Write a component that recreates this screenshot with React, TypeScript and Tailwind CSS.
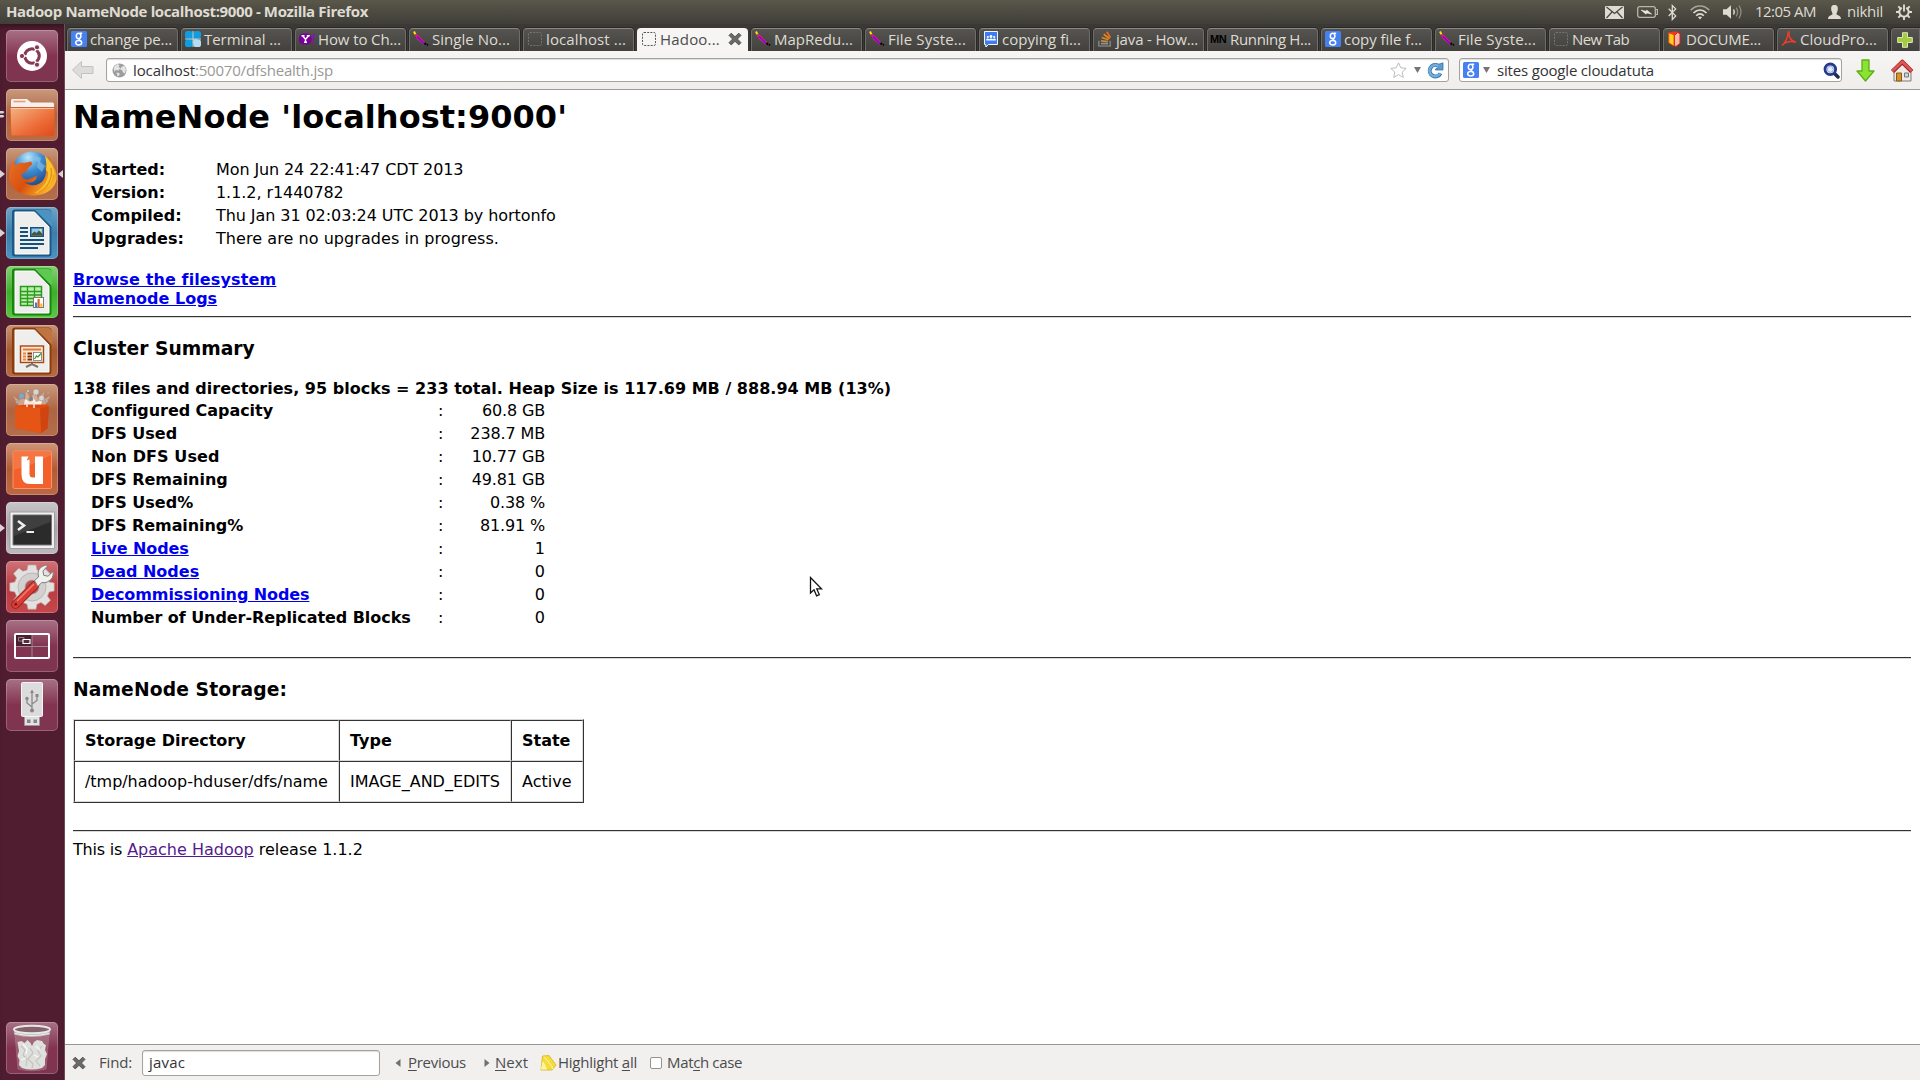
import { useLayoutEffect, useRef, type ReactNode } from "react";

/* Text tracked to occupy a width (w), or its natural width plus an offset (by). */
function Fit({ w, by = 0, className = "", children }: { w?: number; by?: number; className?: string; children: ReactNode }) {
  const ref = useRef<HTMLSpanElement>(null);
  useLayoutEffect(() => {
    const el = ref.current;
    if (!el) return;
    el.style.letterSpacing = "0px";
    const natural = el.getBoundingClientRect().width;
    const count = (el.textContent || "").length;
    const delta = w === undefined ? by : w - natural;
    el.style.letterSpacing = `${delta / count}px`;
  }, [w, by]);
  return (
    <span ref={ref} className={`inline-block whitespace-pre ${className}`}>
      {children}
    </span>
  );
}

/* ---------- favicons ---------- */
const Google = () => (
  <svg width="16" height="16" viewBox="0 0 16 16">
    <rect width="16" height="16" rx="1.5" fill="#4681f0" />
    <g fill="none" stroke="#fff" strokeWidth="1.5">
      <ellipse cx="7.6" cy="4.9" rx="2.3" ry="2.7" />
      <path d="M9 2.3h2.2M8.6 7.4c-2 1 .9 1.6 1.4 3" />
      <ellipse cx="7.7" cy="11.8" rx="3" ry="2.2" />
    </g>
  </svg>
);
const Clover = () => (
  <svg width="16" height="16" viewBox="0 0 16 16">
    <rect x="0" y="0" width="7.600" height="7.600" rx="2.600" fill="#0d9de0" />
    <rect x="8.400" y="0" width="7.600" height="7.600" rx="2.600" fill="#0d9de0" />
    <rect x="0" y="8.400" width="7.600" height="7.600" rx="2.600" fill="#0d9de0" />
    <rect x="8.400" y="8.400" width="7.600" height="7.600" rx="2.600" fill="#b5def5" />
    <path d="M4 4h3.600v3.600H4zM8.400 4H12v3.600H8.400zM4 8.400h3.600V12H4z" fill="#0d9de0" />
    <path d="M8.400 8.400H12V12H8.400z" fill="#b5def5" />
    <path d="M8 0v16M0 8h16" stroke="#e8f5fc" strokeWidth=".8" />
  </svg>
);
const Yahoo = () => (
  <svg width="16" height="16" viewBox="0 0 16 16">
    <rect x="0" y="2.500" width="12.500" height="11" rx="4.500" fill="#7b0099" />
    <path d="M2.500 4.800h3M7.800 4.800h3M3.800 5l2.700 3.300L9.400 5M6.500 8v3.200M5 11.300h3" stroke="#fff" strokeWidth="1.400" fill="none" />
    <path d="M14.800 3l-.7 7M13.700 12.500h1.200" stroke="#8a12a8" strokeWidth="1.900" />
  </svg>
);
const Feather = () => (
  <svg width="16" height="16" viewBox="0 0 16 16">
    <path d="M1 0.500l1.500 3" stroke="#ffe000" strokeWidth="2" />
    <path d="M1.500 3l3.500 1 8 8.500-2.500 1L4 8z" fill="#f5128c" />
    <path d="M4 5.500l7 7" stroke="#5a10d8" strokeWidth="1.200" />
    <path d="M11.500 12l1.500 1.500M14 13.500l1 .8" stroke="#000" strokeWidth="1.800" />
  </svg>
);
const Blank = ({ light = false }: { light?: boolean }) => (
  <svg width="16" height="16" viewBox="0 0 16 16">
    <rect x="1.500" y="1.500" width="13" height="13" rx="1.500" fill="none" stroke={light ? "#555" : "#76756f"} strokeDasharray="2 1.200" />
  </svg>
);
const Groups = () => (
  <svg width="16" height="16" viewBox="0 0 16 16">
    <path d="M1.500.5h13v13H5.500l-2.700 2.700V13.500H1.500z" fill="#3d7df0" stroke="#f5f5f5" />
    <g fill="#fff">
      <circle cx="8" cy="5.500" r="1.400" />
      <circle cx="4.800" cy="6" r="1.100" />
      <circle cx="11.200" cy="6" r="1.100" />
      <path d="M3.200 9.500V8.200q1.500-1.200 3 0 1.800-1.500 3.600 0 1.500-1.200 3 0v1.300z" />
    </g>
  </svg>
);
const Stack = () => (
  <svg width="16" height="16" viewBox="0 0 16 16" fill="none" strokeWidth="1.700">
    <path d="M1.800 9.800v5.200h11.400V9.800" stroke="#7e7d7a" />
    <path d="M4 12.600h7" stroke="#9b9183" />
    <path d="M4 9.800l7 .9" stroke="#b98e4d" />
    <path d="M4.700 6.500l6.800 2.200" stroke="#d98a24" />
    <path d="M6.700 3.300l5.900 4.200" stroke="#ef8416" />
    <path d="M9.800.8l3.700 5.800" stroke="#f26b21" />
  </svg>
);
const MN = () => <span className="-ml-px w-[18px] font-['Liberation_Sans'] text-[11px] font-bold leading-4 tracking-[-0.4px] text-black">MN</span>;
const Book = () => (
  <svg width="16" height="16" viewBox="0 0 16 16">
    <path d="M2 2L6 .5h4l2 2v11l-4 2z" fill="#f2371d" />
    <path d="M7.500 4.500L10.500 1.500l2.500 1v10l-4 3-1.500-1z" fill="#f5b9a8" stroke="#e01a10" />
    <path d="M1.800 1.800l5.200 2v11.200l-5.200-3.200z" fill="#ffd31c" stroke="#f24614" />
  </svg>
);
const Pdf = () => (
  <svg width="16" height="16" viewBox="0 0 16 16" fill="none" stroke="#ee3c2b" strokeWidth="1.500">
    <path d="M1 14.500c3-2 6-8 6.200-13C7.300.3 8.300.8 8 2.500 7.700 6 10 10 15 11.300M1.500 14c3-3 8-4.200 13.500-2.800" />
  </svg>
);

type TabInfo = { label: string; w: number; icon: ReactNode };
const tabs: TabInfo[] = [
  { label: "change pe...", w: 82, icon: <Google /> },
  { label: "Terminal ...", w: 77, icon: <Clover /> },
  { label: "How to Ch...", w: 83, icon: <Yahoo /> },
  { label: "Single No...", w: 78, icon: <Feather /> },
  { label: "localhost ...", w: 80, icon: <Blank /> },
  { label: "Hadoo...", w: 60, icon: <Blank light /> },
  { label: "MapRedu...", w: 79, icon: <Feather /> },
  { label: "File Syste...", w: 78, icon: <Feather /> },
  { label: "copying fi...", w: 79, icon: <Groups /> },
  { label: "java - How...", w: 82, icon: <Stack /> },
  { label: "Running H...", w: 81, icon: <MN /> },
  { label: "copy file f...", w: 78, icon: <Google /> },
  { label: "File Syste...", w: 78, icon: <Feather /> },
  { label: "New Tab", w: 57, icon: <Blank /> },
  { label: "DOCUME...", w: 75, icon: <Book /> },
  { label: "CloudPro...", w: 77, icon: <Pdf /> },
];

const CloseX = () => (
  <svg width="14" height="14" viewBox="0 0 14 14">
    <path d="M3.200 1.200L7 4.800l3.800-3.600 2.200 2.200L9.400 7l3.600 3.700-2.200 2.200L7 9.300l-3.800 3.600L1 10.700 4.600 7 1 3.400z" fill="#6b6a68" stroke="#4a4947" strokeWidth=".9" />
  </svg>
);

/* ---------- top panel ---------- */
function TopPanel() {
  return (
    <header className="flex h-6 items-center bg-gradient-to-b from-[#5a574a] to-[#3f3e39] px-1.5 text-[#dfdbd2]">
      <Fit w={362} className="-mt-0.5 text-[15px] font-bold">Hadoop NameNode localhost:9000 - Mozilla Firefox</Fit>
      <div className="ml-auto flex h-6 items-center">
        <svg className="mr-[13px]" width="19" height="13" viewBox="0 0 19 13">
          <rect width="19" height="13" rx="1" fill="#dfdbd2" />
          <path d="M1.500 1l8 6.500 8-6.500M1.500 12l5.500-6M17.500 12L12 6" fill="none" stroke="#47453e" strokeWidth="1.200" />
        </svg>
        <svg className="mr-[10px]" width="21" height="12" viewBox="0 0 21 12">
          <rect x=".7" y=".7" width="17.600" height="10.600" rx="2" fill="none" stroke="#b9b5aa" strokeWidth="1.300" />
          <path d="M19 3.500h1.400v5H19" fill="none" stroke="#b9b5aa" strokeWidth="1.200" />
          <path d="M4 4l5 1.200.8-1.200 5 4.200-5-1.200-.8 1.200z" fill="#eeeae2" stroke="#eeeae2" strokeWidth=".5" />
        </svg>
        <svg className="mr-[13px]" width="9" height="17" viewBox="0 0 9 17">
          <path d="M.7 4.700l7 7.200L4.300 15.500V1.500l3.400 3.400L.7 12" fill="none" stroke="#dfdbd2" strokeWidth="1.300" />
        </svg>
        <svg className="mr-[13px]" width="20" height="16" viewBox="0 0 20 16" fill="none" strokeWidth="1.700">
          <path d="M.8 6.200C6 .6 14 .6 19.200 6.200" stroke="#a7a398" />
          <path d="M3.500 9c3.800-4 9.200-4 13 0" stroke="#dfdbd2" />
          <path d="M6.200 11.700c2.200-2.400 5.400-2.400 7.600 0" stroke="#dfdbd2" />
          <path d="M8 13.300q2-1.600 4 0l-2 2.200z" fill="#dfdbd2" />
        </svg>
        <svg className="mr-[12px]" width="20" height="16" viewBox="0 0 20 16" fill="none" strokeWidth="1.400">
          <path d="M0 5.200h3.500L8 1.200v13.600l-4.500-4H0z" fill="#dfdbd2" />
          <path d="M10.500 5.500q1.600 2.500 0 5" stroke="#dfdbd2" />
          <path d="M13.200 3.700q2.800 4.300 0 8.600" stroke="#8d897e" />
          <path d="M16 1.500q4 6.500 0 13" stroke="#8d897e" />
        </svg>
        <Fit w={61} className="-mt-0.5 mr-[12px] text-[15px]">12:05 AM</Fit>
        <svg className="mr-[6px]" width="13" height="14" viewBox="0 0 13 14" fill="#dfdbd2">
          <path d="M6.500 0C9.500 0 10 2 9.800 4.500 9.600 6.800 8.500 7.500 8.500 9c0 1.500 4.500 1 4.500 5H0c0-4 4.500-3.500 4.500-5 0-1.500-1.100-2.200-1.300-4.500C3 2 3.500 0 6.500 0z" />
        </svg>
        <Fit w={36} className="-mt-0.5 mr-[13px] text-[15px]">nikhil</Fit>
        <svg className="mr-[2px]" width="16" height="16" viewBox="0 0 16 16" fill="none" stroke="#dfdbd2">
          <path d="M5.800 3.800a4.700 4.700 0 1 0 4.400 0" strokeWidth="2" />
          <path d="M8 .5v7" strokeWidth="1.900" />
          <path d="M8 12.500V16M0 8h3.300M12.700 8H16M2.300 2.300l2.200 2.200M13.700 2.300l-2.200 2.200M2.300 13.700l2.300-2.300M13.700 13.700l-2.300-2.300" strokeWidth="1.900" />
        </svg>
      </div>
    </header>
  );
}

/* ---------- launcher ---------- */
const Ubuntu = () => (
  <svg width="52" height="52" viewBox="0 0 52 52">
    <circle cx="26" cy="26" r="15" fill="#fff" />
    <circle cx="26" cy="26" r="7.200" fill="none" stroke="#853a55" strokeWidth="3.200" />
    <path d="M26 26H14M26 26l6-10.400M26 26l6 10.400" stroke="#fff" strokeWidth="1.500" />
    <circle cx="26" cy="26" r="5.400" fill="#fff" />
    <g fill="#853a55" stroke="#fff" strokeWidth="1">
      <circle cx="16" cy="26" r="2.600" />
      <circle cx="31" cy="17.300" r="2.600" />
      <circle cx="31" cy="34.700" r="2.600" />
    </g>
  </svg>
);
const Folder = () => (
  <svg width="52" height="52" viewBox="0 0 52 52">
    <defs>
      <linearGradient id="fold" x1="0" y1="0" x2="1" y2="1">
        <stop offset="0" stopColor="#f3b483" />
        <stop offset=".6" stopColor="#ec6c38" />
        <stop offset="1" stopColor="#dc4a1a" />
      </linearGradient>
    </defs>
    <path d="M5 20V11.500q0-1.500 1.500-1.500H21l4 3.500h21.500q1.500 0 1.500 1.500v5z" fill="#f4f1ee" />
    <path d="M7.500 12.500h12" stroke="#ef9b6b" strokeWidth="1.600" />
    <path d="M4 18.500h45l-1 28.500H5z" fill="url(#fold)" stroke="#d95d2b" />
    <path d="M5 19.500h43" stroke="#f8c6a2" />
  </svg>
);
const Firefox = () => (
  <svg width="52" height="52" viewBox="0 0 52 52">
    <defs>
      <radialGradient id="globe" cx=".4" cy=".15" r=".9">
        <stop offset="0" stopColor="#b9e6fa" />
        <stop offset=".4" stopColor="#3d8bd0" />
        <stop offset="1" stopColor="#15306f" />
      </radialGradient>
      <linearGradient id="fox" x1="0" y1="0" x2="1" y2=".6">
        <stop offset="0" stopColor="#e8742a" />
        <stop offset=".55" stopColor="#d9500f" />
        <stop offset="1" stopColor="#f9b52a" />
      </linearGradient>
    </defs>
    <circle cx="26" cy="23" r="19.500" fill="url(#globe)" />
    <path d="M30 8l5 2-1 4 5 4-3 6-5-5 1-5-4-2z" fill="#8cc4ea" opacity=".6" />
    <path d="M6 12l4 5q4-3 8-2l7-1.500 1.500 2.500-5 4.500-1 3.500-5 2c0 5 5 7 10 4l5-2c1 4-5 8-12 6 7 6 17 3 20-4s1-11 0-14l4 5V8l7 14c5 14-6 25-21 25.500C13 48 3 39 3 28 3 22 5 18 5.500 16z" fill="url(#fox)" />
    <path d="M39 8c6 5 10 12 9.500 20l-2-2c1 9-7 18-18 19 11-6 14-14 13.500-21L40 22c1-5 0-9-1-14z" fill="#f7c52f" />
    <path d="M45 20c2 10-3 20-12 24" stroke="#f29018" strokeWidth="1.500" fill="none" />
  </svg>
);
const Doc = ({ frame, fold, children }: { frame: string; fold: string; children: ReactNode }) => (
  <svg width="52" height="52" viewBox="0 0 52 52">
    <rect x="6" y="2.500" width="39.500" height="47" rx="3" fill={frame} />
    <path d="M29 3l17 17V7q0-4-4-4z" fill={fold} />
    <path d="M9 5h19.500L43 20v27H9z" fill="#eeeeec" stroke="#fff" />
    {children}
  </svg>
);
const Writer = () => (
  <Doc frame="#1b5a86" fold="#4c93c2">
    <path d="M14 20h8v2h-8zM14 24h8v2h-8zM14 28h8v2h-8zM14 32h24v2H14zM14 36h24v2H14zM14 40h18v2H14zM24 20h14v10H24z" fill="#14527e" />
    <rect x="25.500" y="21.500" width="11" height="7" fill="#8cc8ee" />
    <path d="M25.500 28.500v-1.500l3-2.500 2 1.500 2.500-2.500 3.500 3.500v1.500z" fill="#4d5339" />
    <circle cx="34.500" cy="23" r="1" fill="#ffe36b" />
  </Doc>
);
const Calc = () => (
  <Doc frame="#17860d" fold="#5cc94f">
    <path d="M14.500 20.500h21v19h-21z" fill="#b9efab" stroke="#2c9a1d" strokeWidth="1.500" />
    <path d="M14 25.500h22M14 29h22M14 32.500h22M14 36h22M21.500 20v20M28.500 20v20" stroke="#2c9a1d" strokeWidth="1.300" />
    <rect x="27.500" y="31.500" width="10" height="10" fill="#fff" stroke="#7b7b7b" />
    <path d="M29 36.500h2.200V41H29z" fill="#3f7fd0" />
    <path d="M31.500 33h2.200v8h-2.200z" fill="#e8601c" />
    <path d="M34.300 37.500h2.200V41h-2.200z" fill="#f5c226" />
  </Doc>
);
const Impress = () => (
  <Doc frame="#8c3d0c" fold="#c07442">
    <rect x="14.500" y="21" width="23" height="16.500" fill="#fbe8d9" stroke="#a94611" strokeWidth="1.400" />
    <path d="M17 24.500h18" stroke="#e47d30" strokeWidth="2" />
    <path d="M17 28.500h3M17 31.500h3M17 34.500h3" stroke="#e8863c" strokeWidth="2" />
    <path d="M21.500 28.500h4.500M21.500 31.500h4.500M21.500 34.500h4.500" stroke="#7d3208" strokeWidth="2" />
    <rect x="27.500" y="27.500" width="8" height="8" fill="#fff" stroke="#777" strokeWidth=".8" />
    <path d="M28.500 34l2-3 1.500 1 3-3.500" stroke="#2da32a" fill="none" strokeWidth="1.300" />
    <path d="M26 38v2M20 42l6-3 6 3" stroke="#77736e" strokeWidth="2" fill="none" />
  </Doc>
);
const Bag = () => (
  <svg width="52" height="52" viewBox="0 0 52 52">
    <path d="M13 22L7 12l7 5-1-8 6 7 1-9 5 8 4-9 3 9 6-7-1 8 7-4-5 10z" fill="#fff" opacity=".35" />
    <path d="M18 21l1-6 5 3 3-5 3 5 6-2-1 6z" fill="#fff" opacity=".85" />
    <g fill="#d9d5d2" stroke="#8f8a86" strokeWidth=".8">
      <circle cx="15.500" cy="12" r="3" fill="#82a6c4" />
      <circle cx="30" cy="8" r="3" strokeDasharray="1.500 .7" />
      <circle cx="22" cy="7" r="1.500" />
      <circle cx="35.500" cy="14" r="2.800" strokeDasharray="1.500 .7" />
      <circle cx="25" cy="15" r="2" fill="#73828d" />
      <circle cx="42" cy="9" r="1" />
      <circle cx="11" cy="18" r="1.200" />
      <circle cx="41" cy="17" r="1.200" />
    </g>
    <path d="M9 22l11-1.500h21l2 2-1.500 22L35 49 9 44z" fill="#dd4b10" />
    <path d="M9 22l25 2 9-1.500-1.500 22L35 49 9 44z" fill="#e55616" />
    <path d="M34 24l1 25 6.500-4.500L43 22.500z" fill="#cf4410" />
    <path d="M21 23v-3.500q0-1 1-1h5q1 0 1 1V24" fill="none" stroke="#f6e1d4" strokeWidth="1.600" />
  </svg>
);
const UOne = () => (
  <svg width="52" height="52" viewBox="0 0 52 52">
    <rect x="7" y="8" width="38.500" height="37.500" rx="1.500" fill="#f2602b" stroke="#ff9264" />
    <path d="M7.500 27q20-5 37.500-15V8.500H7.500z" fill="#f98b5c" opacity=".5" />
    <path d="M15.500 13.500h7l-2 4 3-1v14.500q0 3.500 3.500 3.500h2V13.500h8v27.500h-13q-8.500 0-8.500-9.500z" fill="#fff" />
  </svg>
);
const Terminal = () => (
  <svg width="52" height="52" viewBox="0 0 52 52">
    <path d="M4 10h44.500v36.500H4z" fill="#f1eff0" stroke="#a19da0" />
    <path d="M7 13h38.500v30H7z" fill="#2b2b2b" stroke="#777" />
    <path d="M8 14h36.500v6L8 34z" fill="#4c4c4c" opacity=".6" />
    <path d="M12 19l6 4.500-6 4.500" fill="none" stroke="#eee" strokeWidth="2.600" />
    <path d="M20.500 30h7.500" stroke="#eee" strokeWidth="2" />
  </svg>
);
const Settings = () => (
  <svg width="52" height="52" viewBox="0 0 52 52">
    <g fill="#e2e1e0" stroke="#b5a6a4" strokeWidth=".7">
      <path d="M22 4h8l1 5 4 1.700 4.200-3 5.300 5.300-3 4.500L43.200 21l5 1v8l-5 1-1.700 4 3 4.300-5.300 5.200-4.200-3-4 1.700-1 5h-8l-1-5-4-1.700-4.200 3-5.300-5.200 3-4.300L8.800 31l-5-1v-8l5-1 1.700-4.200-3-4.300L12.800 7.200l4.200 3L21 9z" />
      <circle cx="26" cy="26" r="14" fill="#d2d1d0" />
      <circle cx="26" cy="26" r="7" fill="#b55357" />
    </g>
    <path d="M9.500 43.500L29 24" stroke="#911c1b" strokeWidth="8.500" strokeLinecap="round" />
    <path d="M9.500 43.500L29 24" stroke="#d93d34" strokeWidth="6.800" strokeLinecap="round" />
    <path d="M11 40L28 23" stroke="#f0857a" strokeWidth="1.300" />
    <circle cx="9.800" cy="43.300" r="1.300" fill="#701512" />
    <path d="M28.500 19.500l4-3.500q-2-8 4.500-11 3-1.500 5-.5l-5 5.500.7 4.300 4.300.9 5.300-5q.7 8-6 10.800-3 1.200-5.500.5l-4 4z" fill="#f0f0ee" stroke="#7d7d7b" />
  </svg>
);
const Workspace = () => (
  <svg width="52" height="52" viewBox="0 0 52 52">
    <path d="M9 14h17v12H9z" fill="#4a1f31" />
    <path d="M26 14v24M9 26.500h34" stroke="#9d8a91" />
    <rect x="9" y="14" width="34" height="24" rx="1" fill="none" stroke="#fff" strokeWidth="2" />
    <path d="M12.500 17.500h5.500v3.500h-5.500z" fill="none" stroke="#948089" />
    <path d="M17 19.500h7v4h-7z" fill="#5b2a3e" stroke="#fff" strokeWidth="1.200" />
  </svg>
);
const Usb = () => (
  <svg width="52" height="52" viewBox="0 0 52 52">
    <path d="M18.500 37h15v9.500h-15z" fill="#e3e2e2" stroke="#9c9799" />
    <path d="M21 40.500h3.500V44H21zM27.500 40.500H31V44h-3.500z" fill="#898587" />
    <rect x="15.500" y="3.500" width="21" height="34" rx="1" fill="#dddcdc" stroke="#f5f5f5" />
    <path d="M26 13v20M26 28l-5-4v-4M26 25l5-3.500V17" fill="none" stroke="#8a8789" strokeWidth="1.300" />
    <g fill="#8a8789">
      <path d="M26 10.500l2 3.500h-4zM29.500 15h3v3h-3z" />
      <circle cx="21" cy="19.500" r="1.700" />
      <circle cx="26" cy="31.500" r="2" />
    </g>
  </svg>
);
const Trash = () => (
  <svg width="52" height="52" viewBox="0 0 52 52">
    <path d="M9 12l3 35q14 3.500 28 0l3-35z" fill="#c9a6b3" opacity=".35" stroke="#d9c5cc" strokeWidth=".8" />
    <path d="M11.500 20l4-1 3 2 3-3 3 3 1.500 3 2-4 3-2 5 1 2 3 2 1-1 5 2 4-2 5v6l-3 3q-11 3-20 0l-3-3 .5-5-2-4 1.500-5z" fill="#dfe0dd" />
    <path d="M15 24l4 4-2 5 4 4-1 7M24 26l3 5-5 6 5 5-1 4M36 24l-4 5 3 5-5 5 4 5" fill="none" stroke="#c3c5c0" strokeWidth="1.200" />
    <path d="M17 22l4 5-1 5M30 24l4 4M28 33l4 2M15 38l5-2" fill="none" stroke="#f8f8f7" strokeWidth="1.300" />
    <path d="M8 7.500v5q17 5 36 0v-5z" fill="#b3b5b1" />
    <ellipse cx="26" cy="7.500" rx="18" ry="3.800" fill="#84636f" stroke="#e8e9e6" strokeWidth="2" />
    <path d="M9 11.500q17 4 34 0" stroke="#f3f3f1" fill="none" strokeWidth="1.200" />
  </svg>
);

type Item = { bg: string; icon: ReactNode; left?: "one" | "two"; right?: boolean };
const plum = "from-[#a77186] via-[#83334f] to-[#7d3550]";
const clay = "from-[#c99a7d] via-[#ad6442] to-[#b56e4b]";
const items: Item[] = [
  { bg: plum, icon: <Ubuntu /> },
  { bg: clay, icon: <Folder />, left: "two" },
  { bg: clay, icon: <Firefox />, left: "one", right: true },
  { bg: "from-[#6fa5c6] via-[#3c7eab] to-[#4b93c1]", icon: <Writer />, left: "one" },
  { bg: "from-[#84d173] via-[#3dae2b] to-[#57c744]", icon: <Calc /> },
  { bg: "from-[#c79474] via-[#a6592f] to-[#b56c42]", icon: <Impress /> },
  { bg: clay, icon: <Bag /> },
  { bg: "from-[#cf9678] via-[#b15c35] to-[#bd6a44]", icon: <UOne /> },
  { bg: "from-[#c9c6c8] via-[#a7a3a6] to-[#bdb9bc]", icon: <Terminal />, left: "one" },
  { bg: "from-[#cf7378] via-[#b93a42] to-[#c5484b]", icon: <Settings /> },
  { bg: plum, icon: <Workspace /> },
  { bg: plum, icon: <Usb /> },
];

function Tile({ item }: { item: Item }) {
  return (
    <div className="relative flex h-[52px] shrink-0 pl-1.5">
      <div className={`h-[52px] w-[52px] rounded-[5px] bg-gradient-to-b shadow-[inset_0_0_0_1px_rgba(255,255,255,0.22)] ${item.bg}`}>{item.icon}</div>
      {item.left === "one" && (
        <svg className="absolute left-0 top-[21px]" width="5" height="10" viewBox="0 0 5 10">
          <path d="M0 1l5 4-5 4z" fill="#d9d3d6" />
        </svg>
      )}
      {item.left === "two" && (
        <svg className="absolute left-0 top-[21px]" width="5" height="9" viewBox="0 0 5 9">
          <path d="M0 1h3l1.500 1L3 3.500H0zM0 5h3l1.500 1L3 7.500H0z" fill="#d9d3d6" />
        </svg>
      )}
      {item.right && (
        <svg className="absolute right-px top-[21px]" width="5" height="10" viewBox="0 0 5 10">
          <path d="M5 1L0 5l5 4z" fill="#d9d3d6" />
        </svg>
      )}
    </div>
  );
}

function Launcher() {
  return (
    <aside className="flex w-[65px] shrink-0 flex-col gap-[7px] border-r border-[#6f4b59] bg-[#501c30] pb-1.5 pt-1.5 shadow-[inset_0_5px_5px_-3px_rgba(0,0,0,0.4)]">
      {items.map((item, i) => (
        <Tile key={i} item={item} />
      ))}
      <div className="mt-auto">
        <Tile item={{ bg: plum, icon: <Trash /> }} />
      </div>
    </aside>
  );
}

/* ---------- browser chrome ---------- */
function TabStrip() {
  return (
    <div className="flex h-[27px] items-end gap-[3px] bg-[#3a3935] pl-0.5 text-[15px] leading-5 text-[#dfdbd2]">
      {tabs.map((t, i) =>
        i === 5 ? (
          <div key={i} className="flex h-[23px] w-[111px] shrink-0 items-center rounded-t-[4px] bg-[#f6f5f4] pb-px pl-1 text-[#4c4c4c]">
            <span className="flex w-[19px] shrink-0 items-center">{t.icon}</span>
            <Fit w={t.w}>{t.label}</Fit>
            <span className="ml-auto mr-[6px]"><CloseX /></span>
          </div>
        ) : (
          <div key={i} className="flex h-[23px] w-[111px] shrink-0 items-center rounded-t-[4px] border border-b-0 border-[#6e6d69] border-t-[#8a8985] bg-gradient-to-b from-[#555450] to-[#42413d] pb-0.5 pl-[3px] shadow-[0_0_0_1px_#2a2926]">
            <span className="flex w-[19px] shrink-0 items-center">{t.icon}</span>
            <Fit w={t.w}>{t.label}</Fit>
          </div>
        ),
      )}
      <div className="flex h-[23px] flex-1 items-center justify-center rounded-tl-[4px] border border-b-0 border-[#6e6d69] bg-gradient-to-b from-[#555450] to-[#42413d] pb-px pr-0.5 shadow-[0_0_0_1px_#2a2926]">
        <svg width="16" height="16" viewBox="0 0 16 16">
          <path d="M5.500.7h5v4.800h4.800v5h-4.800v4.800h-5v-4.800H.7v-5h4.800z" fill="#a5cb45" stroke="#d7ebb0" />
        </svg>
      </div>
    </div>
  );
}

const Caret = () => (
  <svg width="7" height="6" viewBox="0 0 7 6">
    <path d="M0 0h7L3.500 6z" fill="#757472" />
  </svg>
);

function NavBar() {
  return (
    <div className="flex h-[39px] items-center border-b border-[#9b9a98] bg-gradient-to-b from-[#f6f5f4] to-[#efeeed] pl-[6px] text-[15px]">
      <svg className="mr-[11px] shrink-0" width="24" height="20" viewBox="0 0 24 20">
        <path d="M10.500 1.500v5H22v7H10.500v5L1.500 10z" fill="#dddcda" stroke="#c3c2bf" strokeLinejoin="round" />
      </svg>
      <div className="flex h-6 w-[1343px] shrink-0 items-center rounded-[3px] border border-[#a3a29f] bg-white pl-[5px] shadow-[inset_0_1px_1px_#ddd]">
        <svg className="mr-[6px]" width="15" height="15" viewBox="0 0 15 15">
          <circle cx="7.500" cy="7.500" r="7" fill="#9d9d9d" />
          <path d="M1.500 5q1.500-3 4-4l2 1-1 2 2 1-2 2.500-3-.5-1 2zM9.500 4l3-1.500 1.500 4-1 4-2-1-1-2.500-2-.5zM4.500 9.500l3 .5v2l-2 1.500z" fill="#e4e4e4" />
        </svg>
        <Fit w={62} className="text-[#333]">localhost</Fit>
        <Fit w={138} className="text-[#999896]">:50070/dfshealth.jsp</Fit>
        <div className="ml-auto flex items-center pr-[4px]">
          <svg className="mr-[7px]" width="17" height="16" viewBox="0 0 17 16">
            <path d="M8.500.8l2.300 5 5.400.6-4 3.700 1.100 5.300-4.800-2.700-4.800 2.700 1.100-5.300-4-3.700 5.400-.6z" fill="#fff" stroke="#bcbbb9" />
          </svg>
          <Caret />
          <svg className="ml-[6px]" width="17" height="17" viewBox="0 0 17 17">
            <path d="M13.500 11.300A5.700 5.700 0 1 1 11 3.600" fill="none" stroke="#3573ab" strokeWidth="4" />
            <path d="M8.500 8V7l2.500-1.200L9.500 3 16 .8V8z" fill="#5d9bd0" stroke="#3573ab" strokeWidth=".8" />
            <path d="M13.200 11.500A5.700 5.700 0 1 1 11.500 4" fill="none" stroke="#72aede" strokeWidth="2.400" />
          </svg>
        </div>
      </div>
      <div className="ml-[10px] flex h-6 w-[383px] shrink-0 items-center rounded-[3px] border border-[#a3a29f] bg-white pl-[3px] shadow-[inset_0_1px_1px_#ddd]">
        <Google />
        <span className="ml-1 mr-[7px] flex"><Caret /></span>
        <Fit w={157} className="text-[#333]">sites google cloudatuta</Fit>
        <svg className="ml-auto mr-px" width="17" height="17" viewBox="0 0 17 17">
          <path d="M11 11l4 4" stroke="#222b45" strokeWidth="3.500" strokeLinecap="round" />
          <circle cx="7.300" cy="7.300" r="5.300" fill="#e5ecf7" stroke="#243a8c" strokeWidth="2.800" />
          <circle cx="7.300" cy="7.300" r="3" fill="none" stroke="#7f9bd6" strokeWidth=".8" />
        </svg>
      </div>
      <svg className="ml-[14px] shrink-0" width="19" height="23" viewBox="0 0 19 23">
        <path d="M6 1h7v11h5l-8.500 10L1 12h5z" fill="#8ae234" stroke="#5fae15" strokeWidth="1.300" strokeLinejoin="round" />
      </svg>
      <svg className="ml-[15px] shrink-0" width="24" height="23" viewBox="0 0 24 23">
        <path d="M4 10v12h17V10l-8.500-7z" fill="#eeebe6" stroke="#807d78" />
        <path d="M6.500 14h5v8h-5z" fill="#d7922e" stroke="#8c5a12" />
        <path d="M14.500 14h4v4h-4z" fill="#c3d6e8" stroke="#777" />
        <path d="M2.500 12.500L12.300 3l9.500 9.500" fill="none" stroke="#a32020" strokeWidth="4.500" strokeLinejoin="round" />
        <path d="M2.500 12L12.300 2.800l9.500 9.200" fill="none" stroke="#dd5555" strokeWidth="2.600" strokeLinejoin="round" />
      </svg>
    </div>
  );
}

function FindBar() {
  return (
    <div className="flex h-[36px] items-center border-t border-[#999896] bg-[#f1f0ee] pl-[7px] text-[15px] text-[#4c4c4c]">
      <CloseX />
      <Fit w={33} className="ml-[13px]">Find:</Fit>
      <div className="ml-[10px] flex h-[26px] w-[238px] items-center rounded-[3px] border border-[#a3a29f] bg-white pl-[6px] text-[#333] shadow-[inset_0_1px_1px_#ddd]">
        <Fit w={36}>javac</Fit>
      </div>
      <svg className="ml-[15px]" width="6" height="8" viewBox="0 0 6 8">
        <path d="M5.500 0v8L.5 4z" fill="#71706e" />
      </svg>
      <Fit w={58} className="ml-[7px]"><u className="underline-offset-2">P</u>revious</Fit>
      <svg className="ml-[18px]" width="6" height="8" viewBox="0 0 6 8">
        <path d="M.5 0v8l5-4z" fill="#71706e" />
      </svg>
      <Fit w={33} className="ml-[5px]"><u className="underline-offset-2">N</u>ext</Fit>
      <svg className="ml-[12px]" width="17" height="16" viewBox="0 0 17 16">
        <path d="M2.500 1L9 .5 16 10l-4 5H1z" fill="#f5dc3a" stroke="#d9b512" strokeWidth=".8" />
        <path d="M3 7l3.500 7H1.500z" fill="#fff29a" stroke="#fdf6b8" />
        <path d="M4 1.500l8 10 .5 2.500" fill="none" stroke="#fdf6b8" />
      </svg>
      <Fit w={79} className="ml-px">Highlight <u className="underline-offset-2">a</u>ll</Fit>
      <span className="ml-[13px] h-3 w-3 rounded-[2px] border border-[#94938f] bg-white" />
      <Fit w={75} className="ml-[5px]">Mat<u className="underline-offset-2">c</u>h case</Fit>
    </div>
  );
}

/* ---------- page ---------- */
const info: [string, string, number][] = [
  ["Started:", "Mon Jun 24 22:41:47 CDT 2013", -3],
  ["Version:", "1.1.2, r1440782", -1],
  ["Compiled:", "Thu Jan 31 02:03:24 UTC 2013 by hortonfo", -3],
  ["Upgrades:", "There are no upgrades in progress.", 2],
];
const summary: [string, string, boolean, number][] = [
  ["Configured Capacity", "60.8 GB", false, -1],
  ["DFS Used", "238.7 MB", false, 0],
  ["Non DFS Used", "10.77 GB", false, 1],
  ["DFS Remaining", "49.81 GB", false, -0.5],
  ["DFS Used%", "0.38 %", false, 0],
  ["DFS Remaining%", "81.91 %", false, -1],
  ["Live Nodes", "1", true, -1],
  ["Dead Nodes", "0", true, 0],
  ["Decommissioning Nodes", "0", true, -2],
  ["Number of Under-Replicated Blocks", "0", false, -2],
];
const Rule = () => <hr className="h-0.5 border-b border-t border-b-[#d8d8d8] border-t-[#333]" />;
const cell = "border border-b-[#d8d8d8] border-l-[#333] border-r-[#d8d8d8] border-t-[#333] flex h-[41px] items-center pl-[10px]";

function Page() {
  return (
    <main className="min-h-0 flex-1 bg-white pl-2 pr-[9px] font-['DejaVu_Sans'] text-[16px] leading-[19px] text-black">
      <h1 className="pt-[8px] text-[32px] font-bold leading-[38px]"><Fit by={1}>NameNode 'localhost:9000'</Fit></h1>
      <div className="mt-[22px] pl-[18px]">
        {info.map(([k, v, by]) => (
          <div key={k} className="flex h-[23px] items-center">
            <b className="w-[125px]">{k}</b>
            <Fit by={by}>{v}</Fit>
          </div>
        ))}
      </div>
      <div className="mt-[20px] flex flex-col items-start font-bold text-[#0000ee]">
        <a className="flex underline"><Fit by={2.5} className="underline">Browse the filesystem</Fit></a>
        <a className="underline">Namenode Logs</a>
      </div>
      <div className="mt-[8px]"><Rule /></div>
      <h3 className="mt-[20px] text-[18.720px] font-bold leading-[22px]">Cluster Summary</h3>
      <p className="mt-[19px] flex font-bold"><Fit by={2}>138 files and directories, 95 blocks = 233 total. Heap Size is 117.69 MB / 888.94 MB (13%)</Fit></p>
      <div className="mt-px w-[472px] pl-[18px]">
        {summary.map(([k, v, link, by]) => (
          <div key={k} className="flex h-[23px] items-center">
            <b className="flex w-[347px]">
              <Fit by={by} className={link ? "text-[#0000ee] underline" : ""}>{k}</Fit>
            </b>
            <span>:</span>
            <span className="ml-auto"><Fit by={v.length > 1 ? -1 : 0}>{v}</Fit></span>
          </div>
        ))}
      </div>
      <div className="mt-[28px]"><Rule /></div>
      <h3 className="mt-[20px] flex text-[18.720px] font-bold leading-[22px]"><Fit by={2}>NameNode Storage:</Fit></h3>
      <div className="mt-[18px] grid w-[511px] grid-cols-[265px_172px_72px] border border-b-[#333] border-l-[#d8d8d8] border-r-[#333] border-t-[#d8d8d8]">
        <b className={cell}>Storage Directory</b>
        <b className={cell}>Type</b>
        <b className={cell}>State</b>
        <span className={cell}><Fit by={-1}>/tmp/hadoop-hduser/dfs/name</Fit></span>
        <span className={cell}>IMAGE_AND_EDITS</span>
        <span className={cell}>Active</span>
      </div>
      <div className="mt-[27px]"><Rule /></div>
      <p className="mt-[8px] flex">
        <Fit by={-1.5}>This is </Fit>
        <a className="text-[#551a8b] underline">Apache Hadoop</a>
        <span className="whitespace-pre"> release 1.1.2</span>
      </p>
    </main>
  );
}

export default function App() {
  return (
    <div className="relative flex h-[1080px] w-[1920px] flex-col overflow-hidden bg-white font-['Open_Sans',sans-serif]">
      <TopPanel />
      <div className="flex min-h-0 flex-1">
        <Launcher />
        <section className="flex min-w-0 flex-1 flex-col">
          <TabStrip />
          <NavBar />
          <Page />
          <FindBar />
        </section>
      </div>
      <svg className="absolute left-[809px] top-[576px]" width="16" height="22" viewBox="0 0 16 22">
        <path d="M1.500 1.500v15.500l3.500-3.200 2.600 6 2.700-1.200-2.500-5.700h4.700z" fill="#fff" stroke="#111" strokeWidth="1.300" />
      </svg>
    </div>
  );
}
